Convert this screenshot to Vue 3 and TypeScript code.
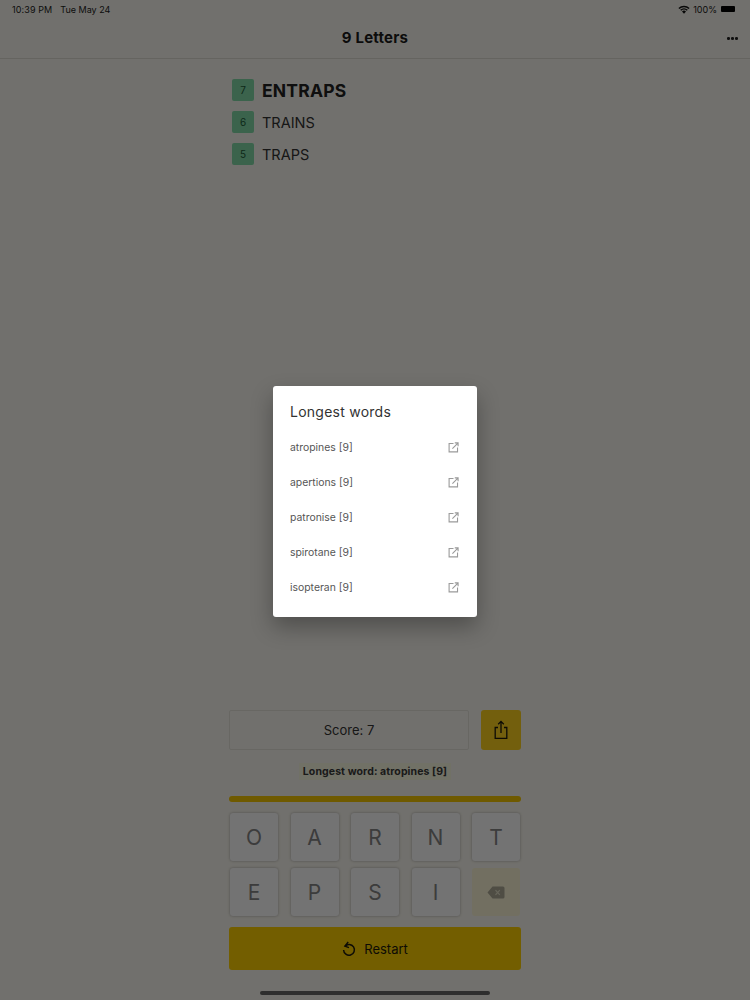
<script setup lang="ts">
// 9 Letters game screen with the "Longest words" dialog open over it.
interface Found { score: number; word: string; best?: boolean }

const found: Found[] = [
  { score: 7, word: 'ENTRAPS', best: true },
  { score: 6, word: 'TRAINS' },
  { score: 5, word: 'TRAPS' },
]
const longest = ['atropines', 'apertions', 'patronise', 'spirotane', 'isopteran']
const letters = ['O', 'A', 'R', 'N', 'T', 'E', 'P', 'S', 'I']
</script>

<template>
  <div class="screen">
    <div class="status">
      <span class="clock">10:39 PM</span>
      <span class="date">Tue May 24</span>
      <span class="status-right">
        <svg class="wifi" width="12" height="9" viewBox="0 0 12 9">
          <path d="M.4 3A8 8 0 0 1 11.6 3L10.6 4A6.6 6.6 0 0 0 1.4 4Z" />
          <path d="M2.2 4.8A5.4 5.4 0 0 1 9.8 4.8L8.8 5.8A4 4 0 0 0 3.2 5.8Z" />
          <path d="M4 6.6A2.8 2.8 0 0 1 8 6.6L6 8.7Z" />
        </svg>
        <span>100%</span>
        <span class="battery"><i></i></span>
      </span>
    </div>

    <header class="nav">
      <h1>9 Letters</h1>
      <span class="more"><i></i><i></i><i></i></span>
    </header>

    <main class="board">
      <ul class="words">
        <li v-for="item in found" :key="item.word" :class="{ best: item.best }">
          <span class="badge">{{ item.score }}</span>
          <span class="word">{{ item.word }}</span>
        </li>
      </ul>

      <div class="controls">
        <div class="score-row">
          <div class="score">Score: 7</div>
          <button class="share" aria-label="Share">
            <svg width="16" height="20" viewBox="0 0 16 20" fill="none" stroke="#1d1a0c" stroke-width="1.3">
              <path d="M5 7.5H2.2V18.3H13.8V7.5H11" />
              <path d="M8 13V1.6M5.2 4.2 8 1.4 10.8 4.2" />
            </svg>
          </button>
        </div>
        <div class="longest"><span>Longest word: atropines [9]</span></div>
        <div class="progress"></div>
        <div class="keys">
          <button v-for="l in letters" :key="l" class="key">{{ l }}</button>
          <button class="key del" aria-label="Delete">
            <svg width="18" height="13" viewBox="0 0 18 13">
              <path d="M5.5.5H16a1.5 1.5 0 0 1 1.5 1.5v9a1.5 1.5 0 0 1-1.5 1.5H5.5L.5 6.5Z" fill="#b0ac98" />
              <path d="M8.5 4.2 12.8 8.8M12.8 4.2 8.5 8.8" stroke="#e4e0c8" stroke-width="1.2" />
            </svg>
          </button>
        </div>
        <button class="restart">
          <svg width="14" height="16" viewBox="0 0 14 16" fill="none" stroke="#1d1a0c" stroke-width="1.5">
            <path d="M3 5.2A5.4 5.4 0 1 1 1.6 9" />
            <path d="M6.2 1 2.9 5.2 7 6.6" stroke-width="1.4" />
          </svg>
          <span>Restart</span>
        </button>
      </div>
    </main>

    <div class="home-bar"></div>

    <div class="scrim"></div>
    <section class="dialog">
      <h2>Longest words</h2>
      <ul>
        <li v-for="w in longest" :key="w">
          <span>{{ w }} [9]</span>
          <svg width="11" height="11" viewBox="0 0 12 12" fill="none" stroke="#9a9a9a" stroke-width="1.2">
            <path d="M6 1.6H1.2V10.8H10.4V6" />
            <path d="M4.8 7.2 10.8 1.2M7.4 1H11V4.6" />
          </svg>
        </li>
      </ul>
    </section>
  </div>
</template>

<style>
html, body { margin: 0; }
</style>

<style scoped>
.screen {
  position: relative;
  width: 750px;
  height: 1000px;
  display: flex;
  flex-direction: column;
  overflow: hidden;
  background: #fbf9f1;
  font-family: Inter, "Liberation Sans", sans-serif;
  color: #222;
}
.status {
  height: 17px;
  padding: 1px 14px 0 12px;
  display: flex;
  align-items: center;
  gap: 8px;
  font-size: 9px;
  box-sizing: border-box;
}
.clock { letter-spacing: .1px; }
.status-right {
  margin-left: auto;
  display: flex;
  align-items: center;
  gap: 3px;
}
.wifi { fill: #111; }
.battery {
  position: relative;
  width: 16px;
  height: 8px;
  display: block;
  padding: 1px;
  box-sizing: border-box;
  border-radius: 2px;
}
.battery i { display: block; height: 100%; background: #000; border-radius: 1px; }
.nav {
  position: relative;
  height: 42px;
  display: flex;
  align-items: center;
  justify-content: center;
  border-bottom: 1px solid #e0ded6;
  box-sizing: border-box;
}
.nav h1 {
  margin: 0;
  font-size: 15px;
  font-weight: 700;
  letter-spacing: .2px;
  color: #1c1c1c;
}
.more {
  position: absolute;
  right: 12px;
  top: 20px;
  display: flex;
  gap: 1.5px;
}
.more i { width: 2.6px; height: 2.6px; border-radius: 50%; background: #222; }
.board {
  flex: 1;
  width: 292px;
  margin: 0 auto;
  display: flex;
  flex-direction: column;
  justify-content: space-between;
}
.words {
  list-style: none;
  margin: 0;
  padding: 20px 0 0 3px;
  display: flex;
  flex-direction: column;
  gap: 10px;
}
.words li { display: flex; align-items: center; gap: 8px; height: 22px; }
.badge {
  width: 22px;
  height: 22px;
  border-radius: 2px;
  background: #84dba8;
  color: #1d5c38;
  font-size: 10px;
  display: flex;
  align-items: center;
  justify-content: center;
}
.word { font-size: 14.5px; color: #333; }
.best .word { font-size: 17.5px; font-weight: 700; letter-spacing: .2px; color: #222; }
.controls {
  padding-bottom: 30px;
  display: flex;
  flex-direction: column;
}
.score-row { display: flex; gap: 12px; }
.score {
  flex: 1;
  height: 40px;
  display: flex;
  align-items: center;
  justify-content: center;
  border: 1px solid #e6e4dc;
  border-radius: 2px;
  box-sizing: border-box;
  font-size: 13px;
  color: #333;
}
.share {
  width: 40px;
  height: 40px;
  padding: 0;
  border: 0;
  border-radius: 3px;
  background: #ffd21e;
  display: flex;
  align-items: center;
  justify-content: center;
}
.longest {
  height: 46px;
  padding-bottom: 4px;
  box-sizing: border-box;
  display: flex;
  align-items: center;
  justify-content: center;
  font-size: 10.5px;
  font-weight: 700;
  letter-spacing: .1px;
  color: #3a3a3a;
}
.longest span { background: #fbfbe2; padding: 2px 4px; }
.progress { height: 6px; background: #f7c800; border-radius: 3px; }
.keys {
  display: grid;
  grid-template-columns: repeat(5, 48px);
  justify-content: space-between;
  row-gap: 7px;
  padding: 11px 1px;
}
.key {
  height: 48px;
  padding: 0;
  border: 0;
  border-radius: 3px;
  background: #fff;
  box-shadow: 0 0 3px rgba(0, 0, 0, .3);
  font: 400 21px Inter, "Liberation Sans", sans-serif;
  color: #858585;
  display: flex;
  align-items: center;
  justify-content: center;
}
.key.del { background: #fdf7d8; box-shadow: none; }
.restart {
  height: 43px;
  padding: 0;
  border: 0;
  border-radius: 3px;
  background: #ffd000;
  display: flex;
  align-items: center;
  justify-content: center;
  gap: 8px;
  font: 400 13px Inter, "Liberation Sans", sans-serif;
  color: #1d1a0c;
}
.home-bar {
  position: absolute;
  left: 260px;
  bottom: 5px;
  width: 230px;
  height: 4px;
  border-radius: 2px;
  background: #666;
}
.scrim {
  position: absolute;
  inset: 0;
  background: rgba(0, 0, 0, .55);
}
.dialog {
  position: absolute;
  left: 273px;
  top: 386px;
  width: 204px;
  height: 231px;
  padding: 17px 18px 0 17px;
  box-sizing: border-box;
  background: #fff;
  border-radius: 3px;
  box-shadow: 0 10px 22px rgba(0, 0, 0, .3);
}
.dialog h2 {
  margin: 0 0 10px;
  font-size: 14px;
  line-height: 17px;
  font-weight: 400;
  letter-spacing: .25px;
  color: #333;
}
.dialog ul { list-style: none; margin: 0; padding: 0; }
.dialog li {
  height: 35px;
  display: flex;
  align-items: center;
  justify-content: space-between;
  font-size: 10.4px;
  color: #555;
}
</style>
